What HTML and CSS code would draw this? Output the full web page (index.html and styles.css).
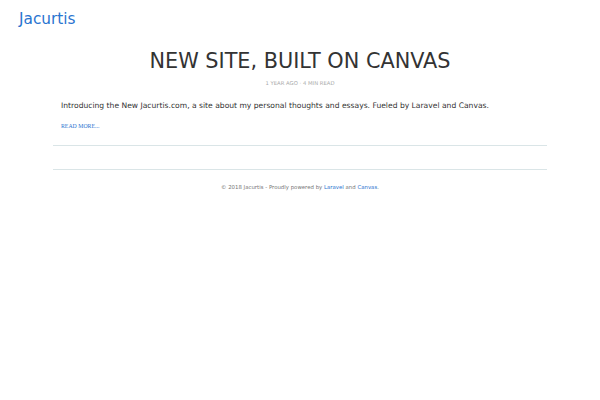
FILE: index.html
```html
<!DOCTYPE html>
<html>
<head>
<meta charset="utf-8">
<link rel="stylesheet" href="styles.css">
</head>
<body>
<header class="site-header">
  <a class="brand" href="#">Jacurtis</a>
</header>
<main class="container">
  <article class="post">
    <h1 class="post-title">NEW SITE, BUILT ON CANVAS</h1>
    <p class="post-meta">1 YEAR AGO · 4 MIN READ</p>
    <p class="post-excerpt">Introducing the New Jacurtis.com, a site about my personal thoughts and essays. Fueled by Laravel and Canvas.</p>
    <a class="read-more" href="#">READ MORE...</a>
  </article>
  <hr class="rule rule-first">
  <hr class="rule rule-second">
  <footer class="site-footer">© 2018 Jacurtis - Proudly powered by <a href="#">Laravel</a> and <a href="#">Canvas</a>.</footer>
</main>
</body>
</html>
```
FILE: styles.css
```css
html, body {
  margin: 0;
  padding: 0;
  background: #fff;
}
body {
  font-family: "DejaVu Sans", sans-serif;
  color: #333;
}
.site-header {
  padding: 9px 19px 0;
  height: 21px;
}
.brand {
  font-size: 15.3px;
  color: #2a74d0;
  text-decoration: none;
  line-height: 20px;
}
.container {
  width: 494px;
  margin: 0 auto;
}
.post {
  padding: 0 8px;
  display: flex;
  flex-direction: column;
}
.post-title {
  margin: 18px 0 0;
  font-size: 20.8px;
  font-weight: 400;
  text-align: center;
  line-height: 26px;
  color: #333;
}
.post-meta {
  margin: 5px 0 0;
  font-size: 5.3px;
  color: #aaa;
  text-align: center;
  line-height: 8px;
}
.post-excerpt {
  margin: 14px 0 0;
  font-size: 7.6px;
  line-height: 10px;
  color: #333;
}
.read-more {
  margin-top: 11px;
  font-family: "Liberation Serif", serif;
  font-size: 5.8px;
  color: #2a74d0;
  text-decoration: none;
  line-height: 8px;
}
.rule {
  border: 0;
  height: 1px;
  background: #dae5e7;
  margin: 0;
}
.rule-first {
  margin-top: 15px;
}
.rule-second {
  margin-top: 23px;
}
.site-footer {
  margin-top: 13px;
  text-align: center;
  font-size: 5.4px;
  line-height: 8px;
  color: #777;
}
.site-footer a {
  color: #2a74d0;
  text-decoration: none;
}
```
